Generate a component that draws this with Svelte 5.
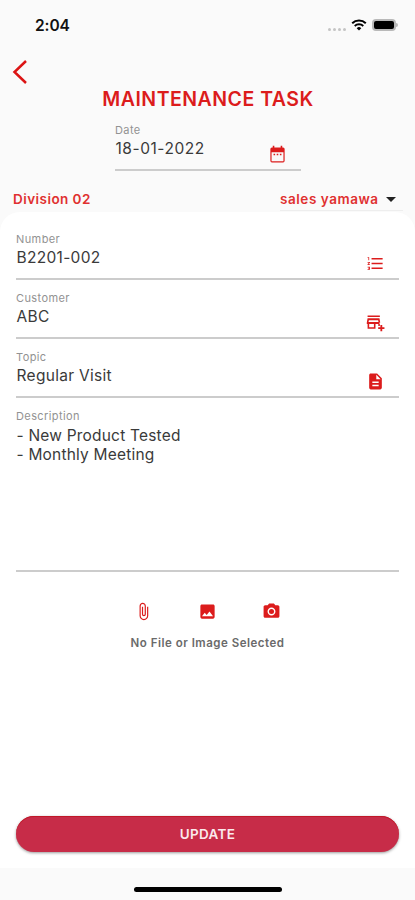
<script lang="ts">
  interface Field {
    label: string;
    value: string;
    icon: 'list' | 'store' | 'file';
  }

  const fields: Field[] = [
    { label: 'Number', value: 'B2201-002', icon: 'list' },
    { label: 'Customer', value: 'ABC', icon: 'store' },
    { label: 'Topic', value: 'Regular Visit', icon: 'file' },
  ];

  const icons = {
    list: 'M2 17h2v.5H3v1h1v.5H2v1h3v-4H2v1zm1-9h1V4H2v1h1v3zm-1 3h1.8L2 13.100v.9h3v-1H3.200L5 10.900V10H2v1zm5-6v2h14V5H7zm0 14h14v-2H7v2zm0-6h14v-2H7v2z',
    store:
      'M2 3h15.500v2H2zM17 14v-2h1V12l-1-5.500H2l-1 5.500v2h1v6h10v-6h3.500v2.500h2v-2.500zM10 18H4v-4h6v4zM3.200 11.500l.5-2.500h11.600l.5 2.500H3.200zM20.500 18v-2.800h-2.300v2.800h-2.800v2.200h2.800v2.800h2.300v-2.800h2.800v-2.200z',
    file: 'M14 2H6c-1.100 0-1.990.9-1.990 2L4 20c0 1.100.89 2 1.990 2H18c1.100 0 2-.9 2-2V8l-6-6zm2 16H8v-2h8v2zm0-4H8v-2h8v2zm-3-5V3.500L18.500 9H13z',
  };

  let date = '18-01-2022';
  let description = '- New Product Tested\n- Monthly Meeting';
</script>

<div class="screen">
  <header class="status">
    <span class="time">2:04</span>
    <div class="indicators">
      <div class="signal"><i></i><i></i><i></i><i></i></div>
      <svg class="wifi" viewBox="0 0 16 12" fill="none" stroke="#000">
        <path d="M1.200 4.300a9.700 9.700 0 0 1 13.600 0" stroke-width="2" />
        <path d="M3.700 7a6.200 6.200 0 0 1 8.600 0" stroke-width="1.800" />
        <path d="M5.700 9.200a3.300 3.300 0 0 1 4.600 0L8 11.500z" fill="#000" stroke="none" />
      </svg>
      <div class="battery"><span></span></div>
    </div>
  </header>

  <button class="back" aria-label="Back">
    <svg viewBox="0 0 16 24" fill="none" stroke="#dc1414" stroke-width="2.500">
      <path d="M14 1 2.500 12 14 23" />
    </svg>
  </button>

  <h1>MAINTENANCE TASK</h1>

  <div class="field date">
    <span class="label">Date</span>
    <span class="value">{date}</span>
    <svg class="icon" viewBox="0 0 24 24">
      <path
        d="M19 3h-1V1h-2v2H8V1H6v2H5a2 2 0 0 0-2 2v15a2 2 0 0 0 2 2h14a2 2 0 0 0 2-2V5a2 2 0 0 0-2-2zm.5 17.500h-15V9h15v11.500zM7 11h2v2H7zm4 0h2v2h-2zm4 0h2v2h-2z"
      />
    </svg>
  </div>

  <div class="owner">
    <span class="division">Division 02</span>
    <div class="select">
      <span>sales yamawa</span>
      <svg viewBox="0 0 10 5"><path d="M0 0h10L5 5z" /></svg>
    </div>
  </div>

  <main class="sheet">
    {#each fields as field}
      <div class="field">
        <span class="label">{field.label}</span>
        <span class="value">{field.value}</span>
        <svg class="icon {field.icon}" viewBox="0 0 24 24"><path d={icons[field.icon]} /></svg>
      </div>
    {/each}
    <div class="field description">
      <span class="label">Description</span>
      <span class="value">{description}</span>
    </div>

    <div class="attachments">
      <svg viewBox="0 0 24 24">
        <path
          d="M16.500 6v11.500c0 2.210-1.790 4-4 4s-4-1.790-4-4V5a2.500 2.500 0 0 1 5 0v10.500c0 .55-.45 1-1 1s-1-.45-1-1V6H10v9.500a2.500 2.500 0 0 0 5 0V5c0-2.210-1.790-4-4-4S7 2.790 7 5v12.500c0 3.040 2.460 5.500 5.500 5.500s5.500-2.460 5.500-5.500V6h-1.500z"
        />
      </svg>
      <svg viewBox="0 0 24 24">
        <path
          d="M21 19V5c0-1.100-.9-2-2-2H5c-1.100 0-2 .9-2 2v14c0 1.100.9 2 2 2h14c1.100 0 2-.9 2-2zM8.500 13.500l2.500 3.010L14.500 12l4.500 6H5l3.500-4.500z"
        />
      </svg>
      <svg viewBox="0 0 24 24">
        <circle cx="12" cy="12" r="3.200" />
        <path
          d="M9 2 7.170 4H4c-1.100 0-2 .9-2 2v12c0 1.100.9 2 2 2h16c1.100 0 2-.9 2-2V6c0-1.100-.9-2-2-2h-3.170L15 2H9zm3 15c-2.760 0-5-2.240-5-5s2.240-5 5-5 5 2.240 5 5-2.240 5-5 5z"
        />
      </svg>
    </div>
    <p class="empty">No File or Image Selected</p>

    <button class="update">UPDATE</button>
  </main>

  <footer><span></span></footer>
</div>

<style>
  :global(body) {
    background: #fafafa;
  }

  .screen {
    display: flex;
    flex-direction: column;
    width: 415px;
    height: 900px;
    box-sizing: border-box;
    overflow: hidden;
    background: #fafafa;
    font-family: Inter, 'Liberation Sans', sans-serif;
    color: #3a3a3a;
  }

  button {
    padding: 0;
    border: none;
    background: none;
    font-family: inherit;
  }

  svg {
    display: block;
  }

  /* Status bar */
  .status {
    display: flex;
    align-items: center;
    justify-content: space-between;
    height: 50px;
    padding: 0 17px 0 35px;
  }

  .time {
    padding-top: 2px;
    color: #111;
    font-size: 15.500px;
    font-weight: 600;
    line-height: 20px;
    letter-spacing: -0.1px;
  }

  .indicators {
    display: flex;
    align-items: center;
  }

  .signal {
    display: flex;
    gap: 2px;
    margin: 8px 5px 0 0;
  }

  .signal i {
    width: 3px;
    height: 3px;
    border-radius: 50%;
    background: #c4c4c4;
  }

  .wifi {
    width: 16px;
    height: 12px;
    margin-right: 5px;
  }

  .battery {
    display: flex;
    align-items: center;
    width: 26px;
  }

  .battery span {
    width: 20px;
    height: 8px;
    border: 2px solid #b9b9b9;
    border-radius: 4px;
    background: #000;
  }

  .battery::after {
    content: '';
    width: 2px;
    height: 4px;
    border-radius: 0 2px 2px 0;
    background: #b9b9b9;
  }

  .back {
    align-self: flex-start;
    margin: 10px 0 0 12px;
  }

  .back svg {
    width: 16px;
    height: 24px;
  }

  h1 {
    margin: 3px 0 0 1px;
    color: #dc1c1c;
    font-size: 19.500px;
    font-weight: 600;
    line-height: 24px;
    letter-spacing: 0.5px;
    text-align: center;
  }

  /* Fields */
  .field {
    display: grid;
    grid-template-columns: 1fr auto;
    grid-template-rows: 16px 20px;
    height: 59px;
    box-sizing: border-box;
    padding-top: 10px;
    border-bottom: 2px solid #ccc;
  }

  .label {
    grid-column: 1 / 3;
    color: #929292;
    font-size: 11px;
    line-height: 16px;
    letter-spacing: 0.4px;
  }

  .value {
    font-size: 15.500px;
    line-height: 21px;
    letter-spacing: 0.3px;
    padding-left: 0.5px;
    white-space: pre;
  }

  .icon {
    width: 19px;
    height: 19px;
    margin: 7px 14px 0 0;
    fill: #dc1c1c;
  }

  .date {
    width: 186px;
    height: 60px;
    padding-top: 11px;
    margin-left: 115px;
  }

  .date .value {
    letter-spacing: 0.55px;
  }

  .owner {
    display: flex;
    justify-content: space-between;
    height: 41px;
    box-sizing: border-box;
    padding: 17px 12px 1px 13px;
    color: #e03030;
    font-size: 13.500px;
    font-weight: 600;
    line-height: 22px;
    letter-spacing: 0.45px;
  }

  .select {
    display: flex;
    align-items: center;
    gap: 7px;
    width: 123px;
    border-bottom: 1px solid #eee;
    letter-spacing: 0.55px;
  }

  .select svg {
    width: 10px;
    height: 5px;
    fill: #222;
  }

  .sheet {
    display: flex;
    flex-direction: column;
    height: 656px;
    box-sizing: border-box;
    padding: 9px 16px 16px;
    border-radius: 20px 20px 0 0;
    background: #fff;
  }

  .description {
    height: 174px;
  }

  .description .value {
    padding-top: 1.5px;
    line-height: 19px;
    letter-spacing: 0.2px;
  }

  .attachments {
    display: flex;
    justify-content: center;
    gap: 45px;
    margin-top: 30px;
  }

  .attachments svg {
    width: 19px;
    height: 19px;
    fill: #dc1c1c;
  }

  .empty {
    margin: 14px 0 0;
    color: #6a6a6a;
    font-size: 11.500px;
    font-weight: 600;
    line-height: 16px;
    letter-spacing: 0.5px;
    text-align: center;
  }

  .update {
    height: 36px;
    margin-top: auto;
    border-radius: 18px;
    background: #c72c48;
    box-shadow:
      inset 0 1px 0 #c01828,
      0 1px 3px rgba(0, 0, 0, 0.4);
    color: #fbe8ec;
    font-size: 13.500px;
    font-weight: 600;
    letter-spacing: 0.3px;
  }

  footer {
    display: flex;
    justify-content: center;
    padding-top: 19px;
  }

  footer span {
    width: 148px;
    height: 5px;
    border-radius: 3px;
    background: #000;
  }
</style>
